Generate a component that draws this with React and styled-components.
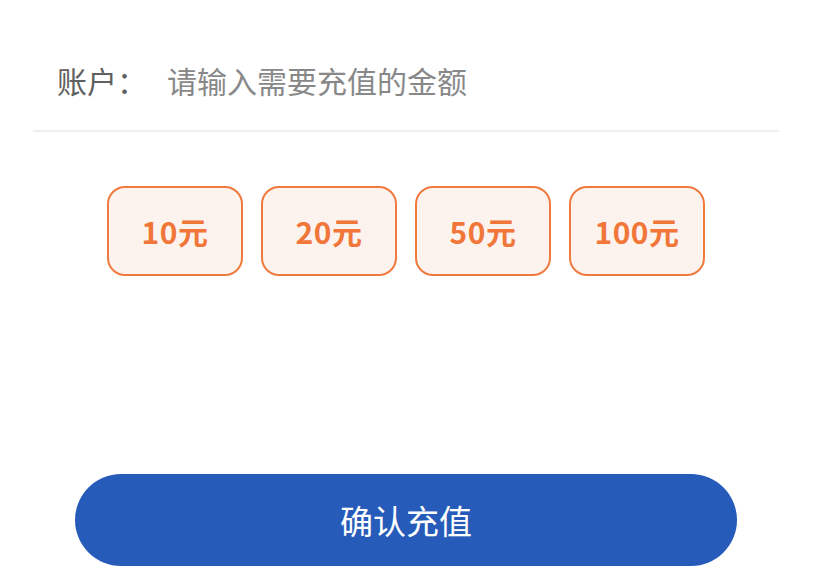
import React, { useState } from "react";
import styled, { createGlobalStyle } from "styled-components";

const GlobalStyle = createGlobalStyle`
  body {
    margin: 0;
    background: #fff;
    font-family: "Noto Sans CJK SC", "Noto Sans", sans-serif;
  }
`;

const Page = styled.div`
  width: 816px;
  height: 586px;
  padding: 40px 37px 0 33px;
  box-sizing: border-box;
  display: flex;
  flex-direction: column;
  overflow: hidden;
`;

const Row = styled.div`
  height: 92px;
  box-sizing: border-box;
  display: flex;
  align-items: center;
  padding: 0 0 10px 24px;
  border-bottom: 2px solid #efefef;
`;

const Label = styled.span`
  font-size: 30px;
  color: #606060;
  width: 110px;
  flex-shrink: 0;
`;

const Input = styled.input`
  flex: 1;
  border: none;
  outline: none;
  font-family: inherit;
  font-size: 30px;
  color: #333;
  padding: 0;
  background: transparent;

  &::placeholder {
    color: #888;
  }
`;

const Amounts = styled.div`
  display: flex;
  justify-content: center;
  gap: 18px;
  margin-top: 54px;
`;

const Amount = styled.button`
  width: 136px;
  height: 90px;
  box-sizing: border-box;
  border: 2px solid #f07a3e;
  border-radius: 18px;
  background: ${(p) => (p.$active ? "#fde6da" : "#fdf3ee")};
  color: #f0763a;
  font-family: inherit;
  font-size: 30px;
  font-weight: 700;
  letter-spacing: 0.5px;
  cursor: pointer;
`;

const Submit = styled.button`
  margin: 198px 42px 0 42px;
  height: 92px;
  border: none;
  border-radius: 46px;
  background: #265bb9;
  color: #fff;
  font-family: inherit;
  font-size: 33px;
  cursor: pointer;
`;

const amounts = [10, 20, 50, 100];

export default function App() {
  const [value, setValue] = useState("");
  const [picked, setPicked] = useState(null);

  return (
    <>
      <GlobalStyle />
      <Page>
        <Row>
          <Label>账户：</Label>
          <Input
            placeholder="请输入需要充值的金额"
            value={value}
            onChange={(e) => setValue(e.target.value)}
          />
        </Row>
        <Amounts>
          {amounts.map((a) => (
            <Amount
              key={a}
              $active={picked === a}
              onClick={() => {
                setPicked(a);
                setValue(String(a));
              }}
            >
              {a}元
            </Amount>
          ))}
        </Amounts>
        <Submit>确认充值</Submit>
      </Page>
    </>
  );
}
